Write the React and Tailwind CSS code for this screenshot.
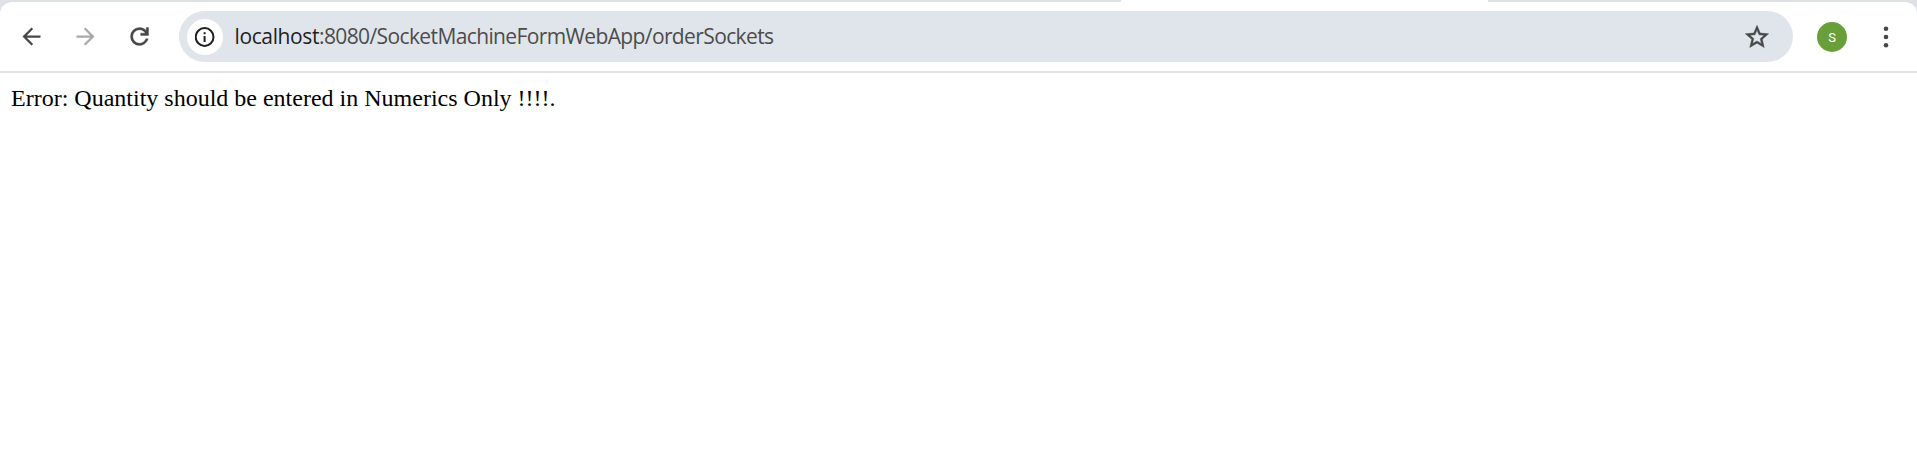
const Icon = ({ d, className }) => (
  <svg width="27" height="27" viewBox="0 -960 960 960" className={`block shrink-0 ${className}`}>
    <path d={d} fill="currentColor" />
  </svg>
);

const BACK = "m313-440 224 224-57 56-320-320 320-320 57 56-224 224h487v80H313Z";
const FORWARD = "M647-440H160v-80h487L423-744l57-56 320 320-320 320-57-56 224-224Z";
const RELOAD =
  "M480-160q-134 0-227-93t-93-227q0-134 93-227t227-93q69 0 132 28.5T720-690v-110h80v280H520v-80h168q-32-56-87.5-88T480-720q-100 0-170 70t-70 170q0 100 70 170t170 70q77 0 139-44t87-116h84q-28 106-114 173t-196 67Z";

export default function App() {
  return (
    <div className="h-[471px] w-full overflow-hidden bg-white">
      <div className="bg-[#dee2e7]">
        <div className="flex h-[2px] justify-center pl-[692px]">
          <div className="h-[2px] w-[367px] bg-white" />
        </div>
        <header className="flex h-[69px] items-center rounded-t-[12px] bg-white pl-[18px]">
          <Icon d={BACK} className="text-[#474747]" />
          <Icon d={FORWARD} className="ml-[27px] text-[#a9a9a9]" />
          <svg width="27" height="27" viewBox="0 -960 960 960" className="ml-[27px] block shrink-0">
            <path d={RELOAD} fill="#474747" stroke="#474747" strokeWidth="14" />
          </svg>
          <div className="ml-[26px] flex h-[51px] w-[1614px] items-center rounded-full bg-[#e0e5ec] pl-2">
            <div className="flex size-9 items-center justify-center rounded-full bg-white">
              <svg width="20" height="20" viewBox="0 0 20 20" fill="none">
                <circle cx="9.6" cy="10" r="8.9" stroke="#1f1f1f" strokeWidth="2" />
                <path d="M9.6 9v6M9.6 5.2v2" stroke="#1f1f1f" strokeWidth="2" />
              </svg>
            </div>
            <div className="-mt-px ml-[11.5px] grow whitespace-nowrap font-['Open_Sans',sans-serif] text-[21px] leading-[30px] tracking-[-0.62px] text-[#4c4c4c]">
              <span className="tracking-[-0.38px] text-[#1f1f1f]">localhost</span>:8080/SocketMachineFormWebApp/orderSockets
            </div>
            <svg className="mr-[22px]" width="28" height="28" viewBox="0 0 24 24" fill="#474747">
              <path
                stroke="#474747"
                strokeWidth="0.4"
                d="M22 9.24l-7.19-.62L12 2 9.19 8.63 2 9.24l5.46 4.73L5.82 21 12 17.27 18.18 21l-1.63-7.03L22 9.24zM12 15.4l-3.76 2.27 1-4.28-3.32-2.88 4.38-.38L12 6.1l1.71 4.04 4.38.38-3.32 2.88 1 4.28L12 15.4z"
              />
            </svg>
          </div>
          <div className="ml-[24px] flex size-[30px] items-center justify-center rounded-full bg-[#689f38] pt-px font-['Roboto',sans-serif] text-[13px] leading-none text-white">S</div>
          <svg className="ml-[36px] block" width="6" height="24" viewBox="0 0 6 24" fill="#474747">
            <circle cx="3" cy="3.8" r="2.3" />
            <circle cx="3" cy="12" r="2.3" />
            <circle cx="3" cy="20.2" r="2.3" />
          </svg>
        </header>
      </div>
      <main className="border-t-2 border-[#e1e3e3] pl-[11px] pt-[11px] font-['Liberation_Serif',serif] text-[24px] leading-[28px] text-black">
        Error: Quantity should be entered in Numerics Only !!!!.
      </main>
    </div>
  );
}
